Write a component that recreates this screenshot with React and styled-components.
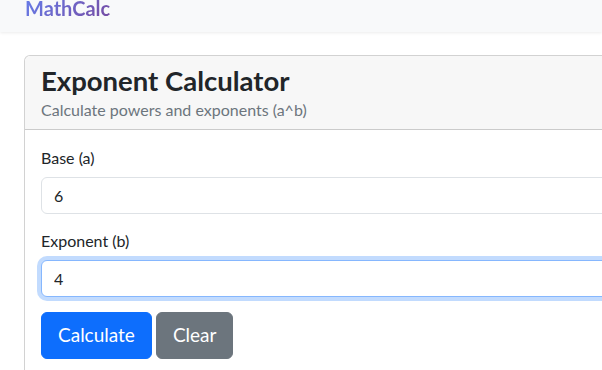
import React from "react";
import styled, { createGlobalStyle } from "styled-components";

const GlobalStyle = createGlobalStyle`
  html, body {
    margin: 0;
    padding: 0;
    background: #ffffff;
    overflow: hidden;
  }
  body {
    font-family: "Lato", "Noto Sans", sans-serif;
    color: #212529;
  }
  * { box-sizing: border-box; }
`;

const Navbar = styled.nav`
  height: 32px;
  background: #f8f9fa;
  box-shadow: 0 1px 3px rgba(0, 0, 0, 0.08);
  overflow: clip;
  padding-left: 25px;
  position: relative;
  z-index: 1;
`;

const Brand = styled.span`
  display: inline-block;
  margin-top: -6px;
  font-size: 20px;
  line-height: 24px;
  font-weight: 700;
  background: linear-gradient(135deg, #667eea 0%, #764ba2 100%);
  -webkit-background-clip: text;
  background-clip: text;
  color: transparent;
`;

const Main = styled.main`
  padding: 23px 0 0 24px;
  width: 100vw;
  overflow: clip;
`;

const Card = styled.section`
  width: 700px;
  border: 1px solid rgba(0, 0, 0, 0.175);
  border-radius: 6px;
  background: #fff;
`;

const CardHeader = styled.header`
  background: #f7f7f7;
  padding: 8px 16px 7px;
  border-bottom: 1px solid rgba(0, 0, 0, 0.175);
  border-radius: 6px 6px 0 0;
`;

const Title = styled.h3`
  margin: 0;
  font-size: 27.5px;
  line-height: 33.6px;
  font-weight: 700;
  color: #212529;
`;

const Subtitle = styled.p`
  margin: 0;
  font-size: 16px;
  line-height: 24px;
  color: #6c757d;
`;

const CardBody = styled.div`
  padding: 16px;
`;

const Field = styled.div`
  margin-bottom: 15px;
`;

const Label = styled.label`
  display: block;
  font-size: 16px;
  line-height: 24px;
  margin-bottom: 7px;
  color: #212529;
`;

const Input = styled.input`
  display: block;
  width: 100%;
  height: 37px;
  padding: 6px 12px;
  font-family: inherit;
  font-size: 16px;
  line-height: 24px;
  color: #212529;
  background: #fff;
  border: 1px solid ${(p) => (p.$focused ? "#86b7fe" : "#dee2e6")};
  border-radius: 6px;
  outline: none;
  caret-color: #212529;
  box-shadow: ${(p) =>
    p.$focused ? "0 0 0 4px rgba(13, 110, 253, 0.25)" : "none"};
`;

const Actions = styled.div`
  display: flex;
  gap: 4px;
`;

const Button = styled.button`
  height: 47px;
  padding: 0 16px;
  font-family: inherit;
  font-size: 19px;
  line-height: 30px;
  color: #fff;
  border: 1px solid ${(p) => (p.$variant === "secondary" ? "#6c757d" : "#0d6efd")};
  background: ${(p) => (p.$variant === "secondary" ? "#6c757d" : "#0d6efd")};
  border-radius: 6px;
  cursor: pointer;
`;

export default function App() {
  return (
    <>
      <GlobalStyle />
      <Navbar>
        <Brand>MathCalc</Brand>
      </Navbar>
      <Main>
        <Card>
          <CardHeader>
            <Title>Exponent Calculator</Title>
            <Subtitle>Calculate powers and exponents (a^b)</Subtitle>
          </CardHeader>
          <CardBody>
            <Field>
              <Label htmlFor="base">Base (a)</Label>
              <Input id="base" type="number" defaultValue="6" />
            </Field>
            <Field>
              <Label htmlFor="exp">Exponent (b)</Label>
              <Input id="exp" type="number" defaultValue="4" $focused autoFocus />
            </Field>
            <Actions>
              <Button type="button">Calculate</Button>
              <Button type="button" $variant="secondary">Clear</Button>
            </Actions>
          </CardBody>
        </Card>
      </Main>
    </>
  );
}
